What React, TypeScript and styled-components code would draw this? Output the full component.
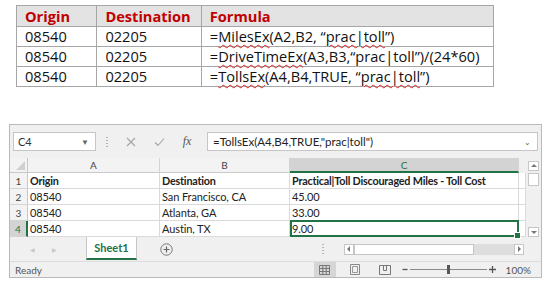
import React from 'react';
import styled, { createGlobalStyle } from 'styled-components';

const GlobalStyle = createGlobalStyle`
  html, body {
    margin: 0;
    padding: 0;
    background: #ffffff;
  }
  body {
    width: 558px;
    height: 293px;
    overflow: hidden;
  }
`;

const Page = styled.div`
  display: flex;
  flex-direction: column;
  padding: 5px 0 0 9px;
`;

/* ---------- formula table ---------- */

const DocTable = styled.table`
  margin-left: 7px;
  border-collapse: collapse;
  font-family: 'Open Sans', 'Noto Sans', sans-serif;
  font-size: 14.6px;
  color: #111;
  width: 478px;
`;

const HeadCell = styled.th<{ w: number }>`
  width: ${(p) => p.w}px;
  height: 20px;
  padding: 0 0 0 8px;
  text-align: left;
  background: #e3e3e3;
  color: #c00000;
  font-weight: 700;
  border: 1px solid #a6a6a6;
  line-height: 18px;
`;

const BodyCell = styled.td`
  height: 19px;
  padding: 0 0 0 8px;
  border: 1px solid #a6a6a6;
  line-height: 17px;
  white-space: nowrap;
`;

const Squiggle = styled.span`
  text-decoration: underline wavy #e02020;
  text-decoration-thickness: 1px;
  text-underline-offset: 2px;
`;

/* ---------- excel window ---------- */

const Window = styled.div`
  margin-top: 37px;
  width: 531px;
  height: 152px;
  border: 1px solid #b9b9b9;
  background: #f0f0f0;
  display: flex;
  flex-direction: column;
  font-family: 'Lato', 'Liberation Sans', sans-serif;
  font-size: 11px;
  color: #222;
`;

const FormulaBar = styled.div`
  display: flex;
  align-items: center;
  height: 19px;
  margin: 7px 0 7px 3px;
`;

const NameBox = styled.div`
  width: 71px;
  height: 17px;
  background: #fff;
  border: 1px solid #c6c6c6;
  display: flex;
  align-items: center;
  justify-content: space-between;
  padding: 0 6px 0 4px;
  color: #333;
`;

const Caret = styled.span`
  font-size: 8px;
  color: #666;
`;

const VDots = styled.div`
  width: 2px;
  height: 10px;
  margin: 0 9px 0 10px;
  background: repeating-linear-gradient(#b3b3b3 0 1px, transparent 1px 3px);
`;

const IconBtn = styled.div<{ w: number }>`
  width: ${(p) => p.w}px;
  display: flex;
  justify-content: center;
  align-items: center;
  color: #9b9b9b;
`;

const Fx = styled.span`
  font-family: 'Liberation Serif', serif;
  font-style: italic;
  font-size: 12px;
  color: #555;
`;

const FormulaInput = styled.div`
  flex: 1;
  margin: 0 3px 0 6px;
  height: 17px;
  background: #fff;
  border: 1px solid #c6c6c6;
  display: flex;
  align-items: center;
  justify-content: space-between;
  padding: 0 6px 0 5px;
  color: #222;
  font-size: 11.5px;
`;

const SheetArea = styled.div`
  display: flex;
  height: 79px;
`;

const Grid = styled.div`
  display: grid;
  grid-template-columns: 18px 132px 130px 229px 7px;
  grid-template-rows: 15px repeat(4, 16px);
  background: #fff;
  position: relative;
`;

const ColHead = styled.div<{ active?: boolean }>`
  background: ${(p) => (p.active ? '#d3d3d3' : '#f3f3f3')};
  border-right: 1px solid #d4d4d4;
  border-bottom: ${(p) => (p.active ? '2px solid #217346' : '1px solid #c9c9c9')};
  color: ${(p) => (p.active ? '#217346' : '#444')};
  display: flex;
  align-items: center;
  justify-content: center;
  font-size: 10px;
`;

const Corner = styled.div`
  background: #f3f3f3;
  border-right: 1px solid #c9c9c9;
  border-bottom: 1px solid #c9c9c9;
  position: relative;
  &::after {
    content: '';
    position: absolute;
    right: 2px;
    bottom: 2px;
    border-left: 9px solid transparent;
    border-bottom: 9px solid #d0d0d0;
  }
`;

const Filler = styled.div`
  background: #f0f0f0;
`;

const RowHead = styled.div<{ active?: boolean }>`
  background: ${(p) => (p.active ? '#d3d3d3' : '#f3f3f3')};
  border-right: ${(p) => (p.active ? '2px solid #217346' : '1px solid #c9c9c9')};
  border-bottom: 1px solid #d4d4d4;
  color: ${(p) => (p.active ? '#217346' : '#444')};
  display: flex;
  align-items: center;
  justify-content: center;
  font-size: 10px;
`;

const Cell = styled.div<{ bold?: boolean }>`
  border-right: 1px solid #dadada;
  border-bottom: 1px solid #dadada;
  padding-left: 2px;
  display: flex;
  align-items: center;
  font-weight: ${(p) => (p.bold ? 700 : 400)};
  font-size: ${(p) => (p.bold ? '10.8px' : '11px')};
  letter-spacing: ${(p) => (p.bold ? '-0.2px' : '-0.1px')};
  white-space: nowrap;
  overflow: hidden;
`;

const Selection = styled.div`
  position: absolute;
  left: 280px;
  top: 62px;
  width: 229px;
  height: 17px;
  box-sizing: border-box;
  border: 2px solid #217346;
  &::after {
    content: '';
    position: absolute;
    right: -4px;
    bottom: -4px;
    width: 5px;
    height: 5px;
    background: #217346;
    border: 1px solid #fff;
  }
`;

const VScroll = styled.div`
  margin: 3px 0 0 2px;
  width: 11px;
  display: flex;
  flex-direction: column;
  justify-content: space-between;
`;

const ScrollBtn = styled.div`
  height: 10px;
  border: 1px solid #c6c6c6;
  background: #fff;
  display: flex;
  align-items: center;
  justify-content: center;
  box-sizing: border-box;
`;

const Thumb = styled.div`
  height: 13px;
  margin-top: 2px;
  background: #fff;
  border: 1px solid #c6c6c6;
  box-sizing: border-box;
`;

const TabRow = styled.div`
  height: 24px;
  display: flex;
  align-items: stretch;
`;

const Nav = styled.div`
  width: 76px;
  display: flex;
  align-items: center;
  padding-left: 20px;
  gap: 17px;
  color: #c8c8c8;
  font-size: 6px;
  box-sizing: border-box;
`;

const Tab = styled.div`
  width: 51px;
  background: #fff;
  border-left: 1px solid #c6c6c6;
  border-right: 1px solid #c6c6c6;
  border-bottom: 2px solid #217346;
  color: #217346;
  font-weight: 700;
  font-size: 11px;
  display: flex;
  align-items: center;
  justify-content: center;
  box-sizing: border-box;
  height: 23px;
`;

const AddSheet = styled.div`
  margin-left: 23px;
  display: flex;
  align-items: center;
`;

const HScrollWrap = styled.div`
  margin-left: auto;
  display: flex;
  align-items: center;
  margin-right: 17px;
`;

const HTrack = styled.div`
  display: flex;
  align-items: center;
  width: 170px;
  height: 11px;
  background: #dedede;
  margin-left: 11px;
`;

const HBtn = styled.div`
  width: 10px;
  height: 11px;
  border: 1px solid #c6c6c6;
  background: #fff;
  box-sizing: border-box;
  display: flex;
  align-items: center;
  justify-content: center;
`;

const HThumb = styled.div`
  width: 120px;
  height: 11px;
  background: #fff;
  border: 1px solid #c6c6c6;
  box-sizing: border-box;
`;

const StatusBar = styled.div`
  flex: 1;
  display: flex;
  align-items: center;
  padding-left: 5px;
  color: #555;
  font-size: 10px;
  border-top: 1px solid #dcdcdc;
`;

const ViewBtns = styled.div`
  margin-left: auto;
  display: flex;
  align-items: center;
  gap: 8px;
  height: 100%;
`;

const ViewBtn = styled.div<{ on?: boolean }>`
  width: 22px;
  height: 100%;
  display: flex;
  align-items: center;
  justify-content: center;
  background: ${(p) => (p.on ? '#d6d6d6' : 'transparent')};
`;

const Zoom = styled.div`
  display: flex;
  align-items: center;
  margin-left: -2px;
`;

const ZoomLine = styled.div`
  width: 77px;
  height: 1px;
  background: #8a8a8a;
  margin: 0 2px;
  position: relative;
  &::after {
    content: '';
    position: absolute;
    left: 37px;
    top: -4px;
    width: 3px;
    height: 9px;
    background: #555;
  }
`;

const Percent = styled.span`
  margin: 0 10px 0 10px;
  font-size: 10px;
`;

const rows = [
  ['08540', '02205'],
  ['08540', '02205'],
  ['08540', '02205'],
];

const XIcon = () => (
  <svg width="10" height="10" viewBox="0 0 10 10">
    <path d="M1 1L9 9M9 1L1 9" stroke="#a3a3a3" strokeWidth="1.1" />
  </svg>
);

const CheckIcon = () => (
  <svg width="11" height="10" viewBox="0 0 11 10">
    <path d="M1 5.5L4 8.5L10 1.5" stroke="#a3a3a3" strokeWidth="1.1" fill="none" />
  </svg>
);

const Arrow = ({ dir }: { dir: 'up' | 'down' | 'left' | 'right' }) => {
  const d = {
    up: 'M1 5L4 2L7 5Z',
    down: 'M1 3L4 6L7 3Z',
    left: 'M5 1L2 4L5 7Z',
    right: 'M3 1L6 4L3 7Z',
  }[dir];
  return (
    <svg width="8" height="8" viewBox="0 0 8 8">
      <path d={d} fill="#777" />
    </svg>
  );
};

const PlusCircle = () => (
  <svg width="13" height="13" viewBox="0 0 13 13">
    <circle cx="6.5" cy="6.5" r="5.7" stroke="#777" fill="none" />
    <path d="M6.5 3.5V9.5M3.5 6.5H9.5" stroke="#666" strokeWidth="1.2" />
  </svg>
);

const Minus = () => (
  <svg width="6" height="7" viewBox="0 0 6 7">
    <path d="M0.5 3.5H5.5" stroke="#555" strokeWidth="1.3" />
  </svg>
);

const Plus = () => (
  <svg width="7" height="7" viewBox="0 0 7 7">
    <path d="M0 3.5H7M3.5 0V7" stroke="#555" strokeWidth="1.3" />
  </svg>
);

const NormalView = () => (
  <svg width="11" height="10" viewBox="0 0 11 10">
    <path
      d="M0.5 0.5H10.5V9.5H0.5ZM0.5 3.5H10.5M0.5 6.5H10.5M3.8 0.5V9.5M7.2 0.5V9.5"
      stroke="#777"
      fill="none"
    />
  </svg>
);

const PageLayout = () => (
  <svg width="10" height="11" viewBox="0 0 10 11">
    <path d="M0.5 0.5H9.5V10.5H0.5Z" stroke="#888" fill="none" />
    <path d="M2.5 2.5H7.5V8.5H2.5Z" stroke="#999" fill="none" />
  </svg>
);

const PageBreak = () => (
  <svg width="12" height="10" viewBox="0 0 12 10">
    <path d="M0.5 0.5H11.5V9.5H0.5ZM4.5 0.5V5.5H7.5V0.5" stroke="#777" fill="none" />
  </svg>
);

export default function App() {
  return (
    <>
      <GlobalStyle />
      <Page>
        <DocTable>
          <thead>
            <tr>
              <HeadCell w={73}>Origin</HeadCell>
              <HeadCell w={96}>Destination</HeadCell>
              <HeadCell w={284}>Formula</HeadCell>
            </tr>
          </thead>
          <tbody>
            <tr>
              <BodyCell>{rows[0][0]}</BodyCell>
              <BodyCell>{rows[0][1]}</BodyCell>
              <BodyCell>
                =<Squiggle>MilesEx</Squiggle>(A2,B2, “<Squiggle>prac|toll</Squiggle>”)
              </BodyCell>
            </tr>
            <tr>
              <BodyCell>{rows[1][0]}</BodyCell>
              <BodyCell>{rows[1][1]}</BodyCell>
              <BodyCell>
                =<Squiggle>DriveTimeEx</Squiggle>(A3,B3,“prac|toll”)/(24*60)
              </BodyCell>
            </tr>
            <tr>
              <BodyCell>{rows[2][0]}</BodyCell>
              <BodyCell>{rows[2][1]}</BodyCell>
              <BodyCell>
                =<Squiggle>TollsEx</Squiggle>(A4,B4,TRUE, “<Squiggle>prac|toll</Squiggle>”)
              </BodyCell>
            </tr>
          </tbody>
        </DocTable>

        <Window>
          <FormulaBar>
            <NameBox>
              C4<Caret>▼</Caret>
            </NameBox>
            <VDots />
            <IconBtn w={28}>
              <XIcon />
            </IconBtn>
            <IconBtn w={28}>
              <CheckIcon />
            </IconBtn>
            <IconBtn w={28}>
              <Fx>fx</Fx>
            </IconBtn>
            <FormulaInput>
              =TollsEx(A4,B4,TRUE,"prac|toll")
              <Caret>⌄</Caret>
            </FormulaInput>
          </FormulaBar>

          <SheetArea>
            <Grid>
              <Corner />
              <ColHead>A</ColHead>
              <ColHead>B</ColHead>
              <ColHead active>C</ColHead>
              <Filler />

              <RowHead>1</RowHead>
              <Cell bold>Origin</Cell>
              <Cell bold>Destination</Cell>
              <Cell bold>Practical|Toll Discouraged Miles - Toll Cost</Cell>
              <Cell />

              <RowHead>2</RowHead>
              <Cell>08540</Cell>
              <Cell>San Francisco, CA</Cell>
              <Cell>45.00</Cell>
              <Cell />

              <RowHead>3</RowHead>
              <Cell>08540</Cell>
              <Cell>Atlanta, GA</Cell>
              <Cell>33.00</Cell>
              <Cell />

              <RowHead active>4</RowHead>
              <Cell>08540</Cell>
              <Cell>Austin, TX</Cell>
              <Cell>9.00</Cell>
              <Cell />

              <Selection />
            </Grid>
            <VScroll>
              <div>
                <ScrollBtn>
                  <Arrow dir="up" />
                </ScrollBtn>
                <Thumb />
              </div>
              <ScrollBtn>
                <Arrow dir="down" />
              </ScrollBtn>
            </VScroll>
          </SheetArea>

          <TabRow>
            <Nav>
              <span>◀</span>
              <span>▶</span>
            </Nav>
            <Tab>Sheet1</Tab>
            <AddSheet>
              <PlusCircle />
            </AddSheet>
            <HScrollWrap>
              <VDots />
              <HTrack>
                <HBtn>
                  <Arrow dir="left" />
                </HBtn>
                <HThumb />
              </HTrack>
              <HBtn>
                <Arrow dir="right" />
              </HBtn>
            </HScrollWrap>
          </TabRow>

          <StatusBar>
            Ready
            <ViewBtns>
              <ViewBtn on>
                <NormalView />
              </ViewBtn>
              <ViewBtn>
                <PageLayout />
              </ViewBtn>
              <ViewBtn>
                <PageBreak />
              </ViewBtn>
              <Zoom>
                <Minus />
                <ZoomLine />
                <Plus />
              </Zoom>
            </ViewBtns>
            <Percent>100%</Percent>
          </StatusBar>
        </Window>
      </Page>
    </>
  );
}
